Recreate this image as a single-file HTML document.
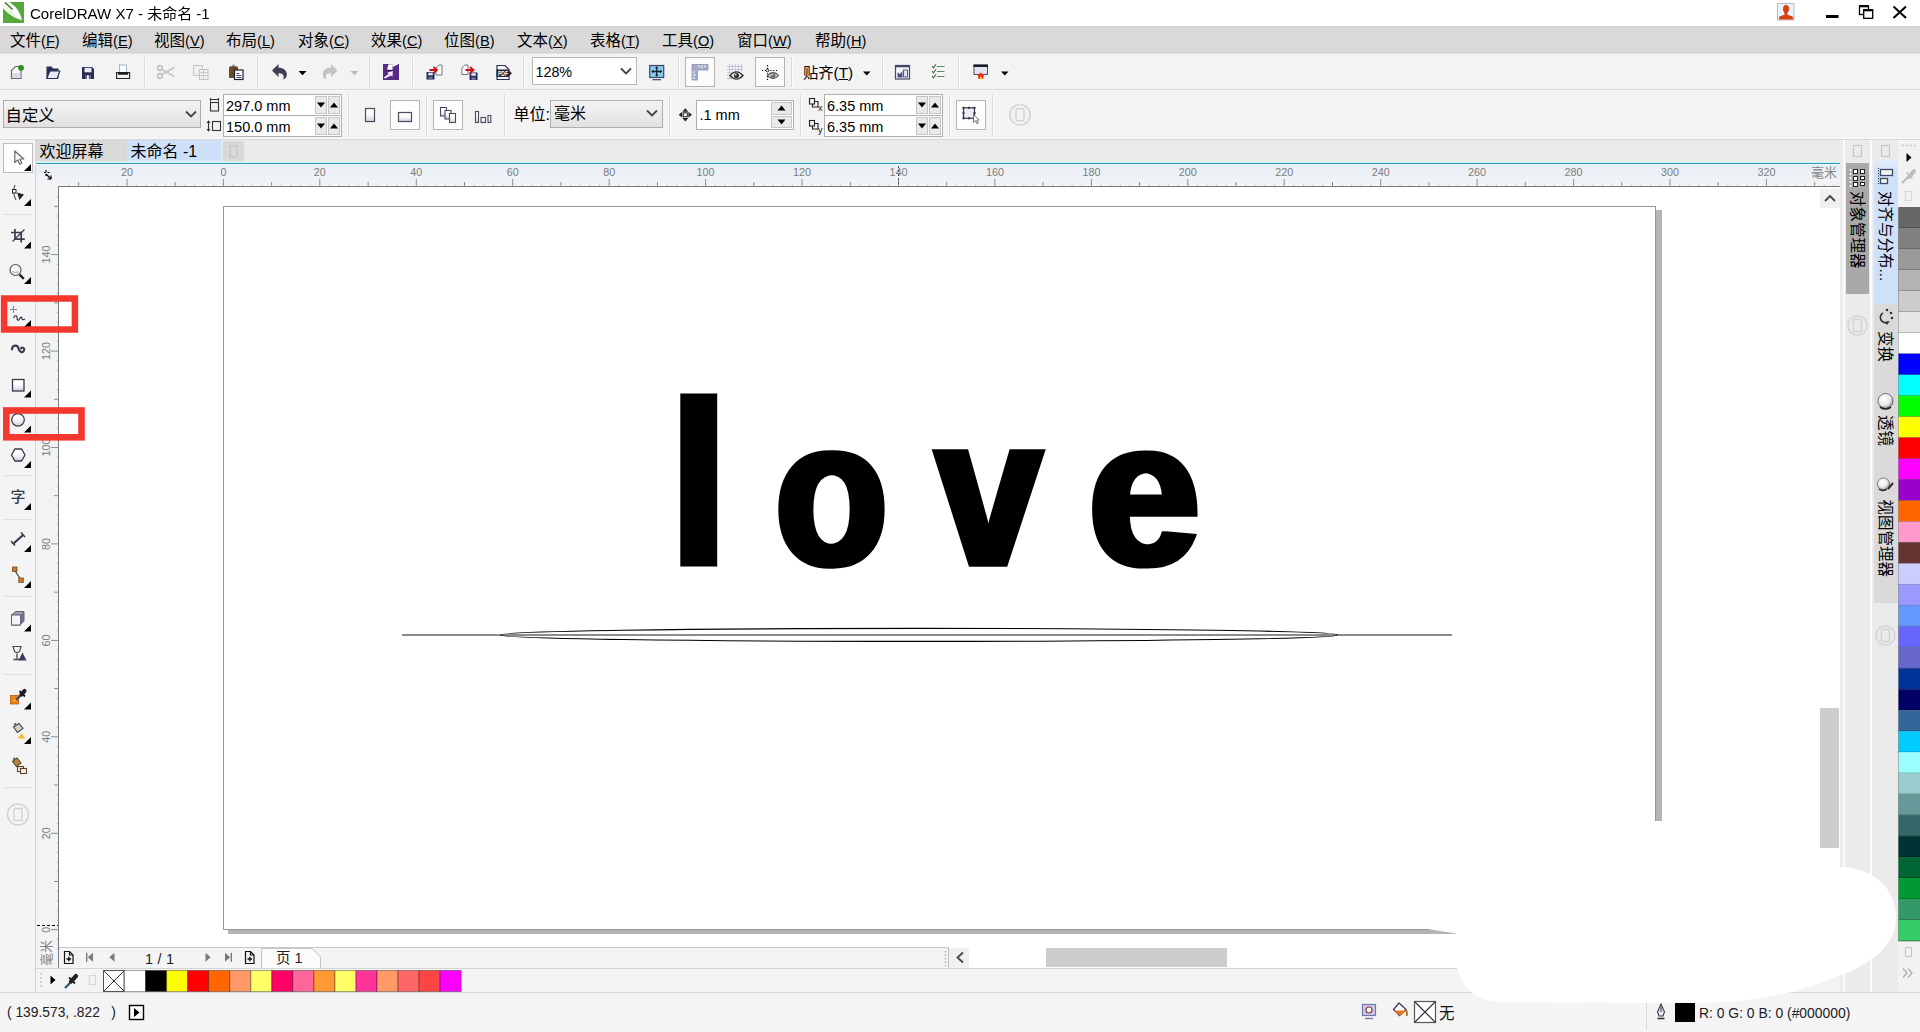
<!DOCTYPE html><html><head><meta charset="utf-8"><title>CorelDRAW X7</title><style>
*{box-sizing:border-box;margin:0;padding:0}
html,body{width:1920px;height:1032px;overflow:hidden;background:#f4f4f4;}
body{position:relative;font-family:"Liberation Sans","Noto Sans CJK SC",sans-serif;color:#000;font-size:15px;}
.a{position:absolute}
.t{position:absolute;white-space:nowrap;line-height:1}
svg{position:absolute;left:0;top:0;overflow:visible}
svg text{font-family:"Liberation Sans","Noto Sans CJK SC",sans-serif}
</style></head><body>
<div class="a" style="left:0px;top:0px;width:1920px;height:26px;background:#ffffff;"></div>
<div class="t" style="left:30px;top:5.9px;font-size:15.3px;color:#000;transform:scaleX(0.982);transform-origin:0 0">CorelDRAW X7 - 未命名 -1</div>
<div class="a" style="left:0px;top:26px;width:1920px;height:28px;background:#d9d9d9;"></div>
<div class="a" style="left:0px;top:26px;width:1920px;height:1px;background:#d3d3d3;"></div>
<div class="a" style="left:0px;top:49px;width:1920px;height:1px;background:#d5d5d5;"></div>
<div class="a" style="left:0px;top:52px;width:1920px;height:1px;background:#d3d3d3;"></div>
<div class="a" style="left:0px;top:53px;width:1920px;height:1px;background:#e2e2e2;"></div>
<div class="t" style="left:10px;top:32.7px;font-size:15.5px;color:#000;">文件<span style="font-size:14.6px">(<u>F</u>)</span></div>
<div class="t" style="left:82px;top:32.7px;font-size:15.5px;color:#000;">编辑<span style="font-size:14.6px">(<u>E</u>)</span></div>
<div class="t" style="left:154px;top:32.7px;font-size:15.5px;color:#000;">视图<span style="font-size:14.6px">(<u>V</u>)</span></div>
<div class="t" style="left:226px;top:32.7px;font-size:15.5px;color:#000;">布局<span style="font-size:14.6px">(<u>L</u>)</span></div>
<div class="t" style="left:298px;top:32.7px;font-size:15.5px;color:#000;">对象<span style="font-size:14.6px">(<u>C</u>)</span></div>
<div class="t" style="left:371px;top:32.7px;font-size:15.5px;color:#000;">效果<span style="font-size:14.6px">(<u>C</u>)</span></div>
<div class="t" style="left:444px;top:32.7px;font-size:15.5px;color:#000;">位图<span style="font-size:14.6px">(<u>B</u>)</span></div>
<div class="t" style="left:517px;top:32.7px;font-size:15.5px;color:#000;">文本<span style="font-size:14.6px">(<u>X</u>)</span></div>
<div class="t" style="left:590px;top:32.7px;font-size:15.5px;color:#000;">表格<span style="font-size:14.6px">(<u>T</u>)</span></div>
<div class="t" style="left:662px;top:32.7px;font-size:15.5px;color:#000;">工具<span style="font-size:14.6px">(<u>O</u>)</span></div>
<div class="t" style="left:737px;top:32.7px;font-size:15.5px;color:#000;">窗口<span style="font-size:14.6px">(<u>W</u>)</span></div>
<div class="t" style="left:815px;top:32.7px;font-size:15.5px;color:#000;">帮助<span style="font-size:14.6px">(<u>H</u>)</span></div>
<div class="a" style="left:0px;top:54px;width:1920px;height:35px;background:#f3f3f3;"></div>
<div class="a" style="left:0px;top:89px;width:1920px;height:1px;background:#d9d9d9;"></div>
<div class="a" style="left:0px;top:90px;width:1920px;height:1px;background:#f8f8f8;"></div>
<div class="a" style="left:144px;top:57px;width:1px;height:30px;background:#dadada;"></div>
<div class="a" style="left:145px;top:57px;width:1px;height:30px;background:#fbfbfb;"></div>
<div class="a" style="left:257px;top:57px;width:1px;height:30px;background:#dadada;"></div>
<div class="a" style="left:258px;top:57px;width:1px;height:30px;background:#fbfbfb;"></div>
<div class="a" style="left:369px;top:57px;width:1px;height:30px;background:#dadada;"></div>
<div class="a" style="left:370px;top:57px;width:1px;height:30px;background:#fbfbfb;"></div>
<div class="a" style="left:412px;top:57px;width:1px;height:30px;background:#dadada;"></div>
<div class="a" style="left:413px;top:57px;width:1px;height:30px;background:#fbfbfb;"></div>
<div class="a" style="left:523px;top:57px;width:1px;height:30px;background:#dadada;"></div>
<div class="a" style="left:524px;top:57px;width:1px;height:30px;background:#fbfbfb;"></div>
<div class="a" style="left:678px;top:57px;width:1px;height:30px;background:#dadada;"></div>
<div class="a" style="left:679px;top:57px;width:1px;height:30px;background:#fbfbfb;"></div>
<div class="a" style="left:791px;top:57px;width:1px;height:30px;background:#dadada;"></div>
<div class="a" style="left:792px;top:57px;width:1px;height:30px;background:#fbfbfb;"></div>
<div class="a" style="left:882px;top:57px;width:1px;height:30px;background:#dadada;"></div>
<div class="a" style="left:883px;top:57px;width:1px;height:30px;background:#fbfbfb;"></div>
<div class="a" style="left:958px;top:57px;width:1px;height:30px;background:#dadada;"></div>
<div class="a" style="left:959px;top:57px;width:1px;height:30px;background:#fbfbfb;"></div>
<div class="a" style="left:532px;top:57px;width:105px;height:28px;background:#fff;border:1px solid #b8b8b8"></div>
<div class="t" style="left:535.5px;top:64.5px;font-size:14.3px;color:#000;">128%</div>
<div class="a" style="left:685px;top:57px;width:30px;height:30px;background:#fbfbfb;border:1px solid #b4b4b4"></div>
<div class="a" style="left:755px;top:57px;width:30px;height:30px;background:#fbfbfb;border:1px solid #b4b4b4"></div>
<div class="t" style="left:803px;top:65px;font-size:15.3px;color:#000;">贴齐(<u>T</u>)</div>
<div class="a" style="left:0px;top:91px;width:1920px;height:48px;background:#f3f3f3;"></div>
<div class="a" style="left:0px;top:139px;width:1920px;height:1px;background:#d6d6d6;"></div>
<div class="a" style="left:0px;top:138px;width:1920px;height:1px;background:#f9f9f9;"></div>
<div class="a" style="left:348px;top:94px;width:1px;height:43px;background:#dadada;"></div>
<div class="a" style="left:349px;top:94px;width:1px;height:43px;background:#fbfbfb;"></div>
<div class="a" style="left:426px;top:94px;width:1px;height:43px;background:#dadada;"></div>
<div class="a" style="left:427px;top:94px;width:1px;height:43px;background:#fbfbfb;"></div>
<div class="a" style="left:504px;top:94px;width:1px;height:43px;background:#dadada;"></div>
<div class="a" style="left:505px;top:94px;width:1px;height:43px;background:#fbfbfb;"></div>
<div class="a" style="left:669px;top:94px;width:1px;height:43px;background:#dadada;"></div>
<div class="a" style="left:670px;top:94px;width:1px;height:43px;background:#fbfbfb;"></div>
<div class="a" style="left:800px;top:94px;width:1px;height:43px;background:#dadada;"></div>
<div class="a" style="left:801px;top:94px;width:1px;height:43px;background:#fbfbfb;"></div>
<div class="a" style="left:949px;top:94px;width:1px;height:43px;background:#dadada;"></div>
<div class="a" style="left:950px;top:94px;width:1px;height:43px;background:#fbfbfb;"></div>
<div class="a" style="left:992px;top:94px;width:1px;height:43px;background:#dadada;"></div>
<div class="a" style="left:993px;top:94px;width:1px;height:43px;background:#fbfbfb;"></div>
<div class="a" style="left:3px;top:100px;width:198px;height:28px;background:linear-gradient(#f3f3f3,#e1e1e1);border:1px solid #adadad"></div>
<div class="t" style="left:5.5px;top:107.3px;font-size:16.4px;color:#000;">自定义</div>
<div class="a" style="left:223px;top:94px;width:119px;height:43px;background:#fff;border:1px solid #b0b0b0"></div>
<div class="a" style="left:223px;top:115px;width:119px;height:1px;background:#b0b0b0;"></div>
<div class="a" style="left:315px;top:96px;width:12px;height:18px;background:#e9e9e9;border:1px solid #c6c6c6"></div>
<div class="a" style="left:328px;top:96px;width:12px;height:18px;background:#e9e9e9;border:1px solid #c6c6c6"></div>
<div class="t" style="left:226px;top:98.5px;font-size:14.5px;color:#000;">297.0 mm</div>
<div class="a" style="left:315px;top:117px;width:12px;height:18px;background:#e9e9e9;border:1px solid #c6c6c6"></div>
<div class="a" style="left:328px;top:117px;width:12px;height:18px;background:#e9e9e9;border:1px solid #c6c6c6"></div>
<div class="t" style="left:226px;top:119.5px;font-size:14.5px;color:#000;">150.0 mm</div>
<div class="a" style="left:824px;top:94px;width:119px;height:43px;background:#fff;border:1px solid #b0b0b0"></div>
<div class="a" style="left:824px;top:115px;width:119px;height:1px;background:#b0b0b0;"></div>
<div class="a" style="left:916px;top:96px;width:12px;height:18px;background:#e9e9e9;border:1px solid #c6c6c6"></div>
<div class="a" style="left:929px;top:96px;width:12px;height:18px;background:#e9e9e9;border:1px solid #c6c6c6"></div>
<div class="t" style="left:827px;top:98.5px;font-size:14.5px;color:#000;">6.35 mm</div>
<div class="a" style="left:916px;top:117px;width:12px;height:18px;background:#e9e9e9;border:1px solid #c6c6c6"></div>
<div class="a" style="left:929px;top:117px;width:12px;height:18px;background:#e9e9e9;border:1px solid #c6c6c6"></div>
<div class="t" style="left:827px;top:119.5px;font-size:14.5px;color:#000;">6.35 mm</div>
<div class="a" style="left:390px;top:100px;width:30px;height:30px;background:#fdfdfd;border:1px solid #b4b4b4"></div>
<div class="a" style="left:433px;top:100px;width:30px;height:30px;background:#fdfdfd;border:1px solid #b4b4b4"></div>
<div class="a" style="left:956px;top:100px;width:30px;height:30px;background:#fdfdfd;border:1px solid #b4b4b4"></div>
<div class="t" style="left:513.5px;top:106.5px;font-size:16px;color:#000;">单位:</div>
<div class="a" style="left:550px;top:100px;width:113px;height:28px;background:linear-gradient(#f3f3f3,#e1e1e1);border:1px solid #adadad"></div>
<div class="t" style="left:554px;top:106px;font-size:16px;color:#000;">毫米</div>
<div class="a" style="left:696px;top:100px;width:98px;height:30px;background:#fff;border:1px solid #b0b0b0"></div>
<div class="t" style="left:699.5px;top:107.5px;font-size:14.5px;color:#000;">.1 mm</div>
<div class="a" style="left:771px;top:102px;width:21px;height:12.5px;background:#e9e9e9;border:1px solid #c6c6c6"></div>
<div class="a" style="left:771px;top:115.5px;width:21px;height:12.5px;background:#e9e9e9;border:1px solid #c6c6c6"></div>
<div class="a" style="left:35px;top:140px;width:1885px;height:23px;background:#eaeaea;"></div>
<div class="a" style="left:35px;top:140px;width:92px;height:23px;background:#d9d9d9;"></div>
<div class="a" style="left:127px;top:140px;width:94px;height:23px;background:#cde0f7;"></div>
<div class="a" style="left:223px;top:141px;width:21px;height:22px;background:#d9d9d9;"></div>
<div class="t" style="left:39.5px;top:143.5px;font-size:16px;color:#000;">欢迎屏幕</div>
<div class="t" style="left:130.5px;top:143.5px;font-size:16px;color:#000;">未命名 -1</div>
<div class="a" style="left:36px;top:161px;width:1804px;height:1px;background:#f0f0f0;"></div>
<div class="a" style="left:36px;top:162px;width:1804px;height:1px;background:#bff2fa;"></div>
<div class="a" style="left:36px;top:163px;width:1804px;height:1px;background:#3e9cb8;"></div>
<div class="a" style="left:36px;top:164px;width:1804px;height:1px;background:#e6f5fa;"></div>
<div class="a" style="left:0px;top:140px;width:35px;height:853px;background:#f4f4f4;"></div>
<div class="a" style="left:35px;top:165px;width:1px;height:828px;background:#d2d2d2;"></div>
<div class="a" style="left:36px;top:165px;width:1804px;height:22px;background:linear-gradient(#e9eff7,#f4f4f5);"></div>
<div class="a" style="left:36px;top:187px;width:23px;height:781px;background:#f2f3f5;"></div>
<div class="a" style="left:59px;top:187px;width:1761px;height:761px;background:#ffffff;"></div>
<div class="a" style="left:1820px;top:187px;width:20px;height:761px;background:#ffffff;"></div>
<div class="a" style="left:1820px;top:189px;width:20px;height:19px;background:#f0f0f0;"></div>
<div class="a" style="left:1820px;top:708px;width:19px;height:139.5px;background:#cdcdcd;"></div>
<div class="a" style="left:59px;top:186px;width:1781px;height:1px;background:#7c7c7c;"></div>
<div class="a" style="left:58px;top:186px;width:1px;height:782px;background:#7c7c7c;"></div>
<div class="a" style="left:228px;top:930px;width:1431px;height:4px;background:#b4b4b4;"></div>
<div class="a" style="left:1656px;top:210px;width:6px;height:611px;background:#b4b4b4;"></div>
<div class="a" style="left:223px;top:206px;width:1433px;height:724px;background:#fff;border:1px solid #969696"></div>
<div class="a" style="left:3px;top:214px;width:29px;height:1px;background:#e2e2e2;"></div>
<div class="a" style="left:3px;top:475px;width:29px;height:1px;background:#e2e2e2;"></div>
<div class="a" style="left:3px;top:519px;width:29px;height:1px;background:#e2e2e2;"></div>
<div class="a" style="left:3px;top:596px;width:29px;height:1px;background:#e2e2e2;"></div>
<div class="a" style="left:3px;top:674px;width:29px;height:1px;background:#e2e2e2;"></div>
<div class="a" style="left:3px;top:787px;width:29px;height:1px;background:#e2e2e2;"></div>
<div class="a" style="left:1840px;top:140px;width:6px;height:853px;background:#ebebeb;"></div>
<div class="a" style="left:1843px;top:140px;width:2px;height:853px;background:#fbfbfb;"></div>
<div class="a" style="left:1846px;top:140px;width:23px;height:853px;background:#ebebeb;"></div>
<div class="a" style="left:1846px;top:163px;width:23px;height:131px;background:#a9a9a9;"></div>
<div class="a" style="left:1869px;top:140px;width:5px;height:853px;background:#ebebeb;"></div>
<div class="a" style="left:1870px;top:140px;width:2px;height:853px;background:#fbfbfb;"></div>
<div class="a" style="left:1874px;top:140px;width:24px;height:853px;background:#ebebeb;"></div>
<div class="a" style="left:1874px;top:160px;width:24px;height:144px;background:linear-gradient(#e4ecf8 0px,#cfe1fa 14px);"></div>
<div class="a" style="left:1874px;top:304px;width:24px;height:299px;background:#dadada;"></div>
<div class="a" style="left:1898px;top:140px;width:22px;height:853px;background:#f2f2f2;"></div>
<div class="a" style="left:59px;top:947px;width:890px;height:1px;background:#c8c8c8;"></div>
<div class="a" style="left:59px;top:948px;width:890px;height:21px;background:#f4f4f4;"></div>
<div class="a" style="left:949px;top:948px;width:20px;height:19px;background:#f0f0f0;"></div>
<div class="a" style="left:969px;top:947px;width:851px;height:21px;background:#ffffff;"></div>
<div class="a" style="left:1046px;top:948px;width:181px;height:19px;background:#cdcdcd;"></div>
<div class="a" style="left:36px;top:968px;width:1804px;height:1px;background:#d4d4d4;"></div>
<div class="a" style="left:948px;top:948px;width:1px;height:20px;background:#bdbdbd;"></div>
<div class="t" style="left:145px;top:952px;font-size:14.5px;color:#222;letter-spacing:0.2px">1 / 1</div>
<div class="a" style="left:36px;top:969px;width:1804px;height:23px;background:#f4f4f4;"></div>
<div class="a" style="left:0px;top:992px;width:1920px;height:1px;background:#d8d8d8;"></div>
<div class="a" style="left:0px;top:993px;width:1920px;height:39px;background:#f4f4f4;"></div>
<div class="t" style="left:7px;top:1006px;font-size:13.8px;color:#222;">( 139.573, .822&nbsp;&nbsp;&nbsp;)</div>
<div class="t" style="left:1439px;top:1005.5px;font-size:15.5px;color:#111;">无</div>
<div class="a" style="left:1646px;top:996px;width:1px;height:34px;background:#dadada;"></div>
<div class="t" style="left:1699px;top:1007px;font-size:13.9px;color:#222;">R: 0 G: 0 B: 0 (#000000)</div>
<svg width="1920" height="1032" viewBox="0 0 1920 1032"><path d="M317,102.5 h8 l-4,5z" fill="#000"/>
<path d="M330,107.5 h8 l-4,-5z" fill="#000"/>
<path d="M317,123.5 h8 l-4,5z" fill="#000"/>
<path d="M330,128.5 h8 l-4,-5z" fill="#000"/>
<path d="M918,102.5 h8 l-4,5z" fill="#000"/>
<path d="M931,107.5 h8 l-4,-5z" fill="#000"/>
<path d="M918,123.5 h8 l-4,5z" fill="#000"/>
<path d="M931,128.5 h8 l-4,-5z" fill="#000"/>
<path d="M777.5,110.5 h8 l-4,-5z" fill="#000"/><path d="M777.5,119.5 h8 l-4,5z" fill="#000"/>
<path d="M186,111.5 L191,116.5 L196,111.5" fill="none" stroke="#444" stroke-width="1.8"/>
<path d="M647,110.5 L652,115.5 L657,110.5" fill="none" stroke="#444" stroke-width="1.8"/>
<path d="M621,68.5 L626,73.5 L631,68.5" fill="none" stroke="#444" stroke-width="1.8"/>
<rect x="230" y="146" width="7" height="11" fill="none" stroke="#c4c4c4" stroke-width="1.2"/>
<path d="M1825,201 L1830,196 L1835,201" fill="none" stroke="#444" stroke-width="1.8"/>
<path d="M78.7,182V186M127.0,179V186M175.2,182V186M223.4,179V186M271.6,182V186M319.8,179V186M368.1,182V186M416.3,179V186M464.5,182V186M512.7,179V186M560.9,182V186M609.2,179V186M657.4,182V186M705.6,179V186M753.8,182V186M802.0,179V186M850.3,182V186M898.5,179V186M946.7,182V186M994.9,179V186M1043.1,182V186M1091.4,179V186M1139.6,182V186M1187.8,179V186M1236.0,182V186M1284.2,179V186M1332.5,182V186M1380.7,179V186M1428.9,182V186M1477.1,179V186M1525.3,182V186M1573.6,179V186M1621.8,182V186M1670.0,179V186M1718.2,182V186M1766.4,179V186M1814.7,182V186" stroke="#8e8e8e" stroke-width="1" fill="none"/>
<path d="M69.1,184.8V186M88.4,184.8V186M98.0,184.8V186M107.7,184.8V186M117.3,184.8V186M136.6,184.8V186M146.2,184.8V186M155.9,184.8V186M165.5,184.8V186M184.8,184.8V186M194.5,184.8V186M204.1,184.8V186M213.8,184.8V186M233.0,184.8V186M242.7,184.8V186M252.3,184.8V186M262.0,184.8V186M281.3,184.8V186M290.9,184.8V186M300.6,184.8V186M310.2,184.8V186M329.5,184.8V186M339.1,184.8V186M348.8,184.8V186M358.4,184.8V186M377.7,184.8V186M387.3,184.8V186M397.0,184.8V186M406.6,184.8V186M425.9,184.8V186M435.6,184.8V186M445.2,184.8V186M454.9,184.8V186M474.1,184.8V186M483.8,184.8V186M493.4,184.8V186M503.1,184.8V186M522.4,184.8V186M532.0,184.8V186M541.7,184.8V186M551.3,184.8V186M570.6,184.8V186M580.2,184.8V186M589.9,184.8V186M599.5,184.8V186M618.8,184.8V186M628.4,184.8V186M638.1,184.8V186M647.7,184.8V186M667.0,184.8V186M676.7,184.8V186M686.3,184.8V186M696.0,184.8V186M715.2,184.8V186M724.9,184.8V186M734.5,184.8V186M744.2,184.8V186M763.5,184.8V186M773.1,184.8V186M782.8,184.8V186M792.4,184.8V186M811.7,184.8V186M821.3,184.8V186M831.0,184.8V186M840.6,184.8V186M859.9,184.8V186M869.5,184.8V186M879.2,184.8V186M888.8,184.8V186M908.1,184.8V186M917.8,184.8V186M927.4,184.8V186M937.1,184.8V186M956.3,184.8V186M966.0,184.8V186M975.6,184.8V186M985.3,184.8V186M1004.6,184.8V186M1014.2,184.8V186M1023.9,184.8V186M1033.5,184.8V186M1052.8,184.8V186M1062.4,184.8V186M1072.1,184.8V186M1081.7,184.8V186M1101.0,184.8V186M1110.6,184.8V186M1120.3,184.8V186M1129.9,184.8V186M1149.2,184.8V186M1158.9,184.8V186M1168.5,184.8V186M1178.2,184.8V186M1197.4,184.8V186M1207.1,184.8V186M1216.7,184.8V186M1226.4,184.8V186M1245.7,184.8V186M1255.3,184.8V186M1265.0,184.8V186M1274.6,184.8V186M1293.9,184.8V186M1303.5,184.8V186M1313.2,184.8V186M1322.8,184.8V186M1342.1,184.8V186M1351.7,184.8V186M1361.4,184.8V186M1371.0,184.8V186M1390.3,184.8V186M1400.0,184.8V186M1409.6,184.8V186M1419.3,184.8V186M1438.5,184.8V186M1448.2,184.8V186M1457.8,184.8V186M1467.5,184.8V186M1486.8,184.8V186M1496.4,184.8V186M1506.1,184.8V186M1515.7,184.8V186M1535.0,184.8V186M1544.6,184.8V186M1554.3,184.8V186M1563.9,184.8V186M1583.2,184.8V186M1592.8,184.8V186M1602.5,184.8V186M1612.1,184.8V186M1631.4,184.8V186M1641.1,184.8V186M1650.7,184.8V186M1660.4,184.8V186M1679.6,184.8V186M1689.3,184.8V186M1698.9,184.8V186M1708.6,184.8V186M1727.9,184.8V186M1737.5,184.8V186M1747.2,184.8V186M1756.8,184.8V186M1776.1,184.8V186M1785.7,184.8V186M1795.4,184.8V186M1805.0,184.8V186M1824.3,184.8V186M1833.9,184.8V186" stroke="#b4b4b4" stroke-width="1" fill="none"/>
<text x="127.0" y="176.3" font-size="10.8" fill="#7c7c7c" text-anchor="middle">20</text>
<text x="223.4" y="176.3" font-size="10.8" fill="#7c7c7c" text-anchor="middle">0</text>
<text x="319.8" y="176.3" font-size="10.8" fill="#7c7c7c" text-anchor="middle">20</text>
<text x="416.3" y="176.3" font-size="10.8" fill="#7c7c7c" text-anchor="middle">40</text>
<text x="512.7" y="176.3" font-size="10.8" fill="#7c7c7c" text-anchor="middle">60</text>
<text x="609.2" y="176.3" font-size="10.8" fill="#7c7c7c" text-anchor="middle">80</text>
<text x="705.6" y="176.3" font-size="10.8" fill="#7c7c7c" text-anchor="middle">100</text>
<text x="802.0" y="176.3" font-size="10.8" fill="#7c7c7c" text-anchor="middle">120</text>
<text x="898.5" y="176.3" font-size="10.8" fill="#7c7c7c" text-anchor="middle">140</text>
<text x="994.9" y="176.3" font-size="10.8" fill="#7c7c7c" text-anchor="middle">160</text>
<text x="1091.4" y="176.3" font-size="10.8" fill="#7c7c7c" text-anchor="middle">180</text>
<text x="1187.8" y="176.3" font-size="10.8" fill="#7c7c7c" text-anchor="middle">200</text>
<text x="1284.2" y="176.3" font-size="10.8" fill="#7c7c7c" text-anchor="middle">220</text>
<text x="1380.7" y="176.3" font-size="10.8" fill="#7c7c7c" text-anchor="middle">240</text>
<text x="1477.1" y="176.3" font-size="10.8" fill="#7c7c7c" text-anchor="middle">260</text>
<text x="1573.6" y="176.3" font-size="10.8" fill="#7c7c7c" text-anchor="middle">280</text>
<text x="1670.0" y="176.3" font-size="10.8" fill="#7c7c7c" text-anchor="middle">300</text>
<text x="1766.4" y="176.3" font-size="10.8" fill="#7c7c7c" text-anchor="middle">320</text>
<text x="1811" y="177" font-size="13" fill="#858585">毫米</text>
<path d="M51,929.7H58M54,881.5H58M51,833.3H58M54,785.0H58M51,736.8H58M54,688.6H58M51,640.4H58M54,592.2H58M51,543.9H58M54,495.7H58M51,447.5H58M54,399.3H58M51,351.1H58M54,302.8H58M51,254.6H58M54,206.4H58" stroke="#8e8e8e" stroke-width="1" fill="none"/>
<path d="M56.8,949.0H58M56.8,939.3H58M56.8,920.1H58M56.8,910.4H58M56.8,900.8H58M56.8,891.1H58M56.8,871.8H58M56.8,862.2H58M56.8,852.5H58M56.8,842.9H58M56.8,823.6H58M56.8,814.0H58M56.8,804.3H58M56.8,794.7H58M56.8,775.4H58M56.8,765.8H58M56.8,756.1H58M56.8,746.5H58M56.8,727.2H58M56.8,717.5H58M56.8,707.9H58M56.8,698.2H58M56.8,679.0H58M56.8,669.3H58M56.8,659.7H58M56.8,650.0H58M56.8,630.7H58M56.8,621.1H58M56.8,611.4H58M56.8,601.8H58M56.8,582.5H58M56.8,572.9H58M56.8,563.2H58M56.8,553.6H58M56.8,534.3H58M56.8,524.7H58M56.8,515.0H58M56.8,505.4H58M56.8,486.1H58M56.8,476.4H58M56.8,466.8H58M56.8,457.1H58M56.8,437.9H58M56.8,428.2H58M56.8,418.6H58M56.8,408.9H58M56.8,389.6H58M56.8,380.0H58M56.8,370.3H58M56.8,360.7H58M56.8,341.4H58M56.8,331.8H58M56.8,322.1H58M56.8,312.5H58M56.8,293.2H58M56.8,283.6H58M56.8,273.9H58M56.8,264.3H58M56.8,245.0H58M56.8,235.3H58M56.8,225.7H58M56.8,216.0H58M56.8,196.8H58" stroke="#b4b4b4" stroke-width="1" fill="none"/>
<text transform="translate(49.5,929.7) rotate(-90)" font-size="10.8" fill="#7c7c7c" text-anchor="middle">0</text>
<text transform="translate(49.5,833.3) rotate(-90)" font-size="10.8" fill="#7c7c7c" text-anchor="middle">20</text>
<text transform="translate(49.5,736.8) rotate(-90)" font-size="10.8" fill="#7c7c7c" text-anchor="middle">40</text>
<text transform="translate(49.5,640.4) rotate(-90)" font-size="10.8" fill="#7c7c7c" text-anchor="middle">60</text>
<text transform="translate(49.5,543.9) rotate(-90)" font-size="10.8" fill="#7c7c7c" text-anchor="middle">80</text>
<text transform="translate(49.5,447.5) rotate(-90)" font-size="10.8" fill="#7c7c7c" text-anchor="middle">100</text>
<text transform="translate(49.5,351.1) rotate(-90)" font-size="10.8" fill="#7c7c7c" text-anchor="middle">120</text>
<text transform="translate(49.5,254.6) rotate(-90)" font-size="10.8" fill="#7c7c7c" text-anchor="middle">140</text>
<text transform="translate(51,966) rotate(-90)" font-size="13" fill="#858585">毫米</text>
<path d="M37,925.5H58" stroke="#000" stroke-width="1" stroke-dasharray="3,2"/>
<path d="M898.5,166V185" stroke="#555" stroke-width="1" stroke-dasharray="2,2"/>
<g stroke="#000" stroke-width="1.2" fill="none"><path d="M44,172.5h2M47.5,172.5h2M46,170v2M46,174v2"/><path d="M46,174 L51,179"/><path d="M51,179 v-3.5 M51,179 h-3.5"/></g>
<text transform="matrix(1.0505 0 0 0.9315 661.52 566.40)" font-size="256.0" font-weight="bold" fill="#000" style="font-family:'Liberation Sans',sans-serif">l</text>
<filter id="dilo" filterUnits="userSpaceOnUse" x="758.2" y="430.0" width="146.5999999999999" height="158.39999999999998"><feMorphology operator="dilate" radius="2 0"/></filter>
<g filter="url(#dilo)"><text transform="matrix(0.7157 0 0 0.8086 775.54 563.88)" font-size="256.0" font-weight="bold" fill="#000" stroke="#000" stroke-width="5.0" stroke-linejoin="miter" stroke-miterlimit="10" vector-effect="non-scaling-stroke" style="font-family:'Liberation Sans',sans-serif">o</text></g>
<filter id="dilv" filterUnits="userSpaceOnUse" x="912.6" y="429.7" width="152.39999999999998" height="156.3"><feMorphology operator="dilate" radius="2 0"/></filter>
<g filter="url(#dilv)"><text transform="matrix(0.7373 0 0 0.8229 936.36 563.50)" font-size="256.0" font-weight="bold" fill="#000" stroke="#000" stroke-width="5.0" stroke-linejoin="miter" stroke-miterlimit="10" vector-effect="non-scaling-stroke" style="font-family:'Liberation Sans',sans-serif">v</text></g>
<filter id="dile" filterUnits="userSpaceOnUse" x="1072" y="430.2" width="145.5" height="158.00000000000006"><feMorphology operator="dilate" radius="2 0"/></filter>
<g filter="url(#dile)"><text transform="matrix(0.7806 0 0 0.8057 1088.69 563.69)" font-size="256.0" font-weight="bold" fill="#000" stroke="#000" stroke-width="5.0" stroke-linejoin="miter" stroke-miterlimit="10" vector-effect="non-scaling-stroke" style="font-family:'Liberation Sans',sans-serif">e</text></g>
<path d="M402,635H1452" stroke="#000" stroke-width="1" opacity="0.9"/>
<ellipse cx="918.9" cy="634.9" rx="418.6" ry="6.5" fill="none" stroke="#000" stroke-width="1.1"/>
<g><rect x="3" y="2" width="21" height="21" fill="#57a83a"/><path d="M3,2 L9,2 C16,6 20,12 22,20 C14,18 7,13 3,7 Z" fill="#fff"/><path d="M3,2 L3,8 C6,12 12,17 21,20 C13,12 8,8 3,2z" fill="#eaf6e4"/><path d="M5,2.500 L12.500,9.500" stroke="#3c7a2c" stroke-width="1.6"/></g>
<g><rect x="1777.5" y="3.500" width="16.500" height="16.500" fill="#eaf2fa" stroke="#b4bccc" stroke-width="1"/><path d="M1786,5 c-2.400,0 -3,2 -3,4 c0,2 0.800,3 1.500,3.800 v2 c-2,0.600 -4.500,1 -5.500,2.200 v2.500 h14 v-2.500 c-1,-1.200 -3.500,-1.600 -5.500,-2.200 v-2 c0.700,-0.800 1.500,-1.800 1.500,-3.800 c0,-2 -0.600,-4 -3,-4z" fill="#d8400e"/></g>
<rect x="1826" y="15" width="12.500" height="3" fill="#000"/>
<g fill="#fff" stroke="#000" stroke-width="1.3"><rect x="1859.500" y="6" width="9" height="8.500"/><path d="M1859,6.200h10" stroke-width="2.200"/><rect x="1863.700" y="10" width="9" height="8.300"/><path d="M1863.200,10.200h10" stroke-width="2.200"/></g>
<path d="M1893.500,6.500 l12.500,11.500 M1906,6.500 l-12.500,11.500" stroke="#000" stroke-width="2"/>
<g><path d="M11.500,78.500 v-8 l4,-4 h5.500 v12z" fill="#fafafa" stroke="#6a6a78" stroke-width="1.200"/><path d="M12,73h8.500v5h-8.500z" fill="#dcdce4"/><circle cx="21" cy="67.800" r="2.900" fill="#2a8a1a"/></g>
<g><path d="M46.500,78.500 v-12 h5 l1.500,2 h5.500 v10z" fill="#292c56"/><path d="M46.800,78.500 l3,-7.500 h10 l-2.500,7.500z" fill="#e4e8f0" stroke="#292c56" stroke-width="1.100"/></g>
<g><path d="M82,67 h10 l2,2 v10 h-12z" fill="#292c56"/><rect x="84.500" y="67.800" width="7" height="4.500" fill="#e8e8f4"/><rect x="85" y="75" width="6" height="4" fill="#5a5f90"/><rect x="87" y="75.500" width="1.800" height="3.500" fill="#fff"/></g>
<g><rect x="119.500" y="65" width="7" height="9" fill="#fdfdff" stroke="#9ab0c8" stroke-width="0.900"/><path d="M116.600,72.500 h13 v6 h-13z" fill="#f6f2ea" stroke="#222" stroke-width="1.100"/><path d="M118,73.800h10.200" stroke="#111" stroke-width="1.800"/></g>
<g fill="none" stroke="#c4c4c4" stroke-width="1.700"><circle cx="160" cy="68" r="2.300"/><circle cx="160" cy="76" r="2.300"/><path d="M162,69.500 L174.500,76.500 M162,74.500 L174.500,67.500"/></g>
<g fill="#f0f0f0" stroke="#c4c4c4" stroke-width="1"><rect x="193.500" y="65.500" width="9" height="10"/><rect x="199.500" y="69.500" width="8.500" height="10"/><path d="M200,72.500h8M200,75.500h8M203.500,70v9" stroke-width="0.800"/></g>
<g><rect x="229" y="66.500" width="9" height="11.500" rx="1" fill="#6b4a2a"/><path d="M231.500,66.500 q2,-3 4,0z" fill="#e8e8e8" stroke="#555" stroke-width="0.800"/><rect x="234.500" y="70" width="8.500" height="9.500" fill="#fff" stroke="#223" stroke-width="1.200"/><path d="M236.500,73.500h3M236.500,75.500h5M236.500,77.500h5" stroke="#2c3163" stroke-width="0.900"/></g>
<g transform="translate(272,64)"><path d="M0,6.500 L6.500,0 V3.800 C11.500,3.800 14.800,6.500 14.800,10.500 C14.800,13 13.500,15 11,15.500 C12,14 12,11.500 10.500,10.300 C9.500,9.500 8,9.300 6.500,9.300 V13z" fill="#3e3e50"/></g>
<g transform="translate(337.5,64) scale(-1,1)"><path d="M0,6.500 L6.500,0 V3.800 C11.500,3.800 14.800,6.500 14.800,10.500 C14.800,13 13.500,15 11,15.500 C12,14 12,11.500 10.500,10.300 C9.500,9.500 8,9.300 6.500,9.300 V13z" fill="#c2c2c2"/></g>
<path d="M298.500,71 h8 l-4,4.200z" fill="#000"/><path d="M350.500,71 h8 l-4,4.200z" fill="#b8b8b8"/>
<g><rect x="383" y="64" width="16" height="16" fill="#572a86"/><path d="M388.3,64.600 L392.600,64.600 L392.500,67.200 L398.600,64.100 L399.200,63.700 L399.200,63 L392.600,63.500 Z" fill="#f3f3f3"/><path d="M388.300,64.600 L392.500,64.600 L392.500,69.900 L387,69.900 Z" fill="#fff"/><path d="M386.800,70.300h5.800" stroke="#1a0a30" stroke-width="0.900"/><path d="M392.900,70.900 L392.500,76.700 L391,75.400 L385,78.600 L383.700,77.400 L388.600,74 L387.400,72.600 Z" fill="#f6e6ff"/></g>
<g><rect x="426.5" y="72" width="8" height="7.500" fill="#292c56"/><rect x="428.3" y="72.7" width="4.500" height="2.600" fill="#e4e4f4"/><rect x="428.5" y="76.8" width="4" height="2.700" fill="#6a6fa0"/></g>
<path d="M436,75 v-7 l3,-3 h3 v10z" fill="#fafafa" stroke="#778" stroke-width="1"/><path d="M429.500,70 h6.500 M433.500,67 l3.500,3 l-3.500,3" fill="none" stroke="#d01010" stroke-width="1.800"/>
<g><rect x="469.5" y="72.5" width="8" height="7.500" fill="#292c56"/><rect x="471.3" y="73.2" width="4.500" height="2.600" fill="#e4e4f4"/><rect x="471.5" y="77.3" width="4" height="2.700" fill="#6a6fa0"/></g>
<path d="M461.800,74.500 v-6.500 l3,-3 h3.200 v9.500z" fill="#fafafa" stroke="#778" stroke-width="1"/><path d="M465.500,70 h7 M470,67 l3.500,3 l-3.500,3" fill="none" stroke="#d01010" stroke-width="1.800"/>
<g><path d="M497,79.500 v-14 h8 l4,4 v10z" fill="#f4f4fa" stroke="#2a2f55" stroke-width="1.200"/><path d="M496.500,69.500 h11.500 l4,3.700 l-4,3.700 h-11.500z" fill="#222638"/><text x="498" y="76.300" font-size="6.500" font-weight="bold" fill="#fff" textLength="10" lengthAdjust="spacingAndGlyphs">PDF</text></g>
<g><rect x="649.700" y="65.500" width="14" height="12" fill="#8cc6e8" stroke="#3c4866" stroke-width="1.200"/><path d="M656.700,67v9M652,71.500h9.500" stroke="#123" stroke-width="1.300"/><path d="M656.700,66.300l-1.800,2h3.600zM656.700,76.700l-1.800,-2h3.600zM651.300,71.500l2,-1.800v3.600zM662.200,71.500l-2,-1.800v3.600z" fill="#123"/><path d="M652.500,79.700h8.500" stroke="#3c4866" stroke-width="1.200"/></g>
<g><path d="M692,64.500 h16 v5.500 h-10.500 v10 h-5.500z" fill="#a6acc8" stroke="#8a90b0" stroke-width="0.800"/><path d="M699,65v2.500M702,65v3.500M705,65v2.500M692.500,72h2.500M692.500,75h3.500M692.500,78h2.500" stroke="#f4f4ff" stroke-width="1"/></g>
<path d="M727,66.500h16M727,69.500h16M727,72.500h8M727,75.500h6M727,78.500h5M729.500,64v16M732.500,64v12M735.500,64v9M738.500,64v8M741.500,64v8" stroke="#bcbccc" stroke-width="0.800"/>
<g opacity="1"><path d="M730.0,75.5 Q736.5,68.3 743.0,75.5 Q736.5,82.7 730.0,75.5z" fill="#f4f4f4" stroke="#333" stroke-width="1.400"/><circle cx="736.5" cy="75.5" r="2.600" fill="#333"/><circle cx="735.7" cy="74.7" r="0.800" fill="#fff"/></g>
<path d="M762,70.500h15M767.500,65v15" stroke="#000" stroke-width="1.200" stroke-dasharray="1.200,1.600"/><circle cx="767.500" cy="70.500" r="1.400" fill="#fff" stroke="#000" stroke-width="0.800"/>
<g opacity="0.85"><path d="M767.5,75.5 Q773,69.5 778.5,75.5 Q773,81.5 767.5,75.5z" fill="#f4f4f4" stroke="#555" stroke-width="1.400"/><circle cx="773" cy="75.5" r="2.600" fill="#555"/><circle cx="772.2" cy="74.7" r="0.800" fill="#fff"/></g>
<path d="M863,71.500 h7.500 l-3.750,4z" fill="#000"/>
<g><rect x="895.500" y="65.500" width="14" height="13.500" fill="#f4f4fa" stroke="#44486a" stroke-width="1.200"/><path d="M895.500,66.300h14" stroke="#44486a" stroke-width="2"/><path d="M897.500,77.500 v-5 l2.500,1.500 l2.500,-3 v6.500z" fill="#4a4f88"/><rect x="903.500" y="70" width="4" height="7" fill="#e0e0f0" stroke="#4a4f88" stroke-width="0.900"/></g>
<g stroke="#5a8a5a" fill="none" stroke-width="1.200"><path d="M937,66.500h7.500M937,71.500h7.500M937,76.500h7.500"/><path d="M932,66l1.500,1.800l2.500,-3.500M932,71l1.500,1.800l2.500,-3.500M932,76l1.500,1.800l2.500,-3.500" stroke="#3a6a3a" stroke-width="1.100"/></g>
<g><rect x="974" y="65" width="13.500" height="9.500" fill="#dfe3ee" stroke="#555" stroke-width="1"/><path d="M973.500,65.800h14.500" stroke="#1a1a2a" stroke-width="2.400"/><path d="M977.500,75 l3.300,-2.500 l3.300,2.500 l-1.300,4.500 l-2,-1.800 l-2,1.800z" fill="#e83020"/><path d="M979.500,78l1.300,-2l1.300,2l-1.300,1.500z" fill="#ffc020"/></g>
<path d="M1001,71.500 h7.500 l-3.750,4z" fill="#000"/>
<g fill="none" stroke="#333" stroke-width="1.100"><rect x="210.500" y="102.500" width="8" height="8.500" fill="#f0f0f6"/><path d="M210.500,98v3.500M218.500,98v3.500M210.500,99.500h8"/></g>
<g fill="none" stroke="#333" stroke-width="1.100"><rect x="212.500" y="121.500" width="8" height="9" fill="#f0f0f6"/><path d="M208.500,121.500v9M207,123l1.500,-1.800l1.500,1.800M207,129l1.500,1.800l1.500,-1.800"/></g>
<defs><linearGradient id="pg" x1="0" y1="0" x2="0" y2="1"><stop offset="0.400" stop-color="#fff"/><stop offset="1" stop-color="#d0d0e0"/></linearGradient></defs>
<rect x="365.500" y="108.500" width="9" height="13" fill="url(#pg)" stroke="#4a4a5c" stroke-width="1.200"/>
<rect x="398.500" y="112.500" width="13" height="9" fill="url(#pg)" stroke="#4a4a5c" stroke-width="1.200"/>
<g fill="url(#pg)" stroke="#4a4a5c" stroke-width="1.100"><rect x="440.500" y="107.500" width="6" height="8.500"/><rect x="445" y="110.500" width="6" height="8.500"/><rect x="449.500" y="113.500" width="6" height="9"/></g>
<g fill="url(#pg)" stroke="#4a4a5c" stroke-width="1.100"><rect x="475.500" y="111.500" width="3" height="11"/><rect x="481" y="117.500" width="4.500" height="5"/><rect x="488" y="115.500" width="2.800" height="7"/></g>
<g fill="#222"><path d="M685.300,108.200l3,3.500h-6zM685.300,121.400l3,-3.500h-6zM678.700,114.800l3.500,-3v6zM691.900,114.800l-3.500,-3v6z"/><rect x="683.300" y="112.800" width="4" height="4" fill="#fff" stroke="#222" stroke-width="1"/></g>
<g fill="none" stroke="#222" stroke-width="1.100"><rect x="809.5" y="98.5" width="5" height="5.500"/><path d="M812.5,104.0v3h5.500v-5.500h-3.500"/></g><text x="818.0" y="111.0" font-size="9" fill="#111">x</text>
<g fill="none" stroke="#222" stroke-width="1.100"><rect x="809.5" y="120.5" width="5" height="5.500"/><path d="M812.5,126.0v3h5.500v-5.500h-3.500"/></g><text x="818.0" y="133.0" font-size="9" fill="#111">y</text>
<g><rect x="963.500" y="107.800" width="11" height="10.500" fill="#ececf6" stroke="#333348" stroke-width="1.200"/><g fill="#333348"><rect x="962.500" y="106.800" width="2" height="2"/><rect x="973.500" y="106.800" width="2" height="2"/><rect x="962.500" y="117.300" width="2" height="2"/><rect x="968" y="106.800" width="2" height="2"/><rect x="968" y="117.300" width="2" height="2"/><rect x="962.500" y="112" width="2" height="2"/><rect x="973.500" y="112" width="2" height="2"/></g><path d="M973.500,114.500 v8 l2,-1.800 l1.500,3 l1.300,-0.700 l-1.500,-3 h2.500z" fill="#fff" stroke="#667" stroke-width="0.900"/></g>
<circle cx="1020" cy="114.8" r="10.2" fill="none" stroke="#d2d2d2" stroke-width="1.4"/><rect x="1016" y="108.8" width="8" height="12" rx="1" fill="none" stroke="#d2d2d2" stroke-width="1.4"/>
<rect x="3.500" y="143.500" width="29" height="29" fill="#fff" stroke="#bcbcbc" stroke-width="1"/>
<path d="M14.800,151 v11.500 l3,-2.600 l2,4.300 l2,-1 l-2,-4.200 h4z" fill="#fff" stroke="#666678" stroke-width="1.200" stroke-linejoin="round"/>
<path d="M31,171 h-7 l7,-7z" fill="#000"/>
<g><path d="M15,185 q-3,8 1,15" fill="none" stroke="#555" stroke-width="1.100"/><rect x="12.500" y="189.500" width="3.500" height="3.500" fill="#fff" stroke="#222" stroke-width="1"/><path d="M17,192.500 l7,2 l-4.500,5.500z" fill="#222"/></g>
<path d="M31,206 h-7 l7,-7z" fill="#000"/>
<g stroke="#3a3a4e" stroke-width="1.700" fill="none"><path d="M15,229v10.200h9.800M11,232.500h10.200v10"/><path d="M12.500,241.500 L24.500,229.500" stroke-width="1.300"/></g>
<path d="M31,248.5 h-7 l7,-7z" fill="#000"/>
<g><circle cx="15.500" cy="270" r="5.500" fill="#f4f4f8" stroke="#555" stroke-width="1.200"/><path d="M12.500,271.500 q3,2 6,0" stroke="#aab" stroke-width="1.200" fill="none"/><path d="M19.500,274.500 l4.300,4.300" stroke="#222" stroke-width="2.400"/></g>
<path d="M31,284 h-7 l7,-7z" fill="#000"/>
<g fill="none" stroke="#3a3a4e" stroke-width="1.200"><path d="M13.500,306v7M10,309.500h7" stroke="#7a84a0" stroke-width="1"/><path d="M13.500,318 c1.500,-3.500 3.500,-2.500 3.500,-0.500 c0,3 1.500,3.500 2.500,1.500 c1,-2.500 2.500,-2 2.500,-0.500 c0,1.500 1.500,1.500 3,0.500" stroke-width="1.300"/></g>
<path d="M31,327 h-7 l7,-7z" fill="#000"/>
<path d="M12,349.500 c0,-5 6,-5 6.500,-1 c0.500,3.500 4,5 5.500,2 c1,-2.500 -2,-4 -3,-2" fill="none" stroke="#3a3a4e" stroke-width="2.100" stroke-linecap="round"/>
<rect x="12.500" y="379.500" width="11.500" height="11.500" fill="url(#pg)" stroke="#3a3a4e" stroke-width="1.300"/>
<path d="M31,397.5 h-7 l7,-7z" fill="#000"/>
<circle cx="18" cy="419.800" r="6.300" fill="url(#pg)" stroke="#3a3a4e" stroke-width="1.300"/>
<path d="M31,432.5 h-7 l7,-7z" fill="#000"/>
<path d="M11.500,455 l3.500,-6 h6.500 l3.500,6 l-3.500,6 h-6.500z" fill="url(#pg)" stroke="#3a3a4e" stroke-width="1.300"/>
<path d="M31,468 h-7 l7,-7z" fill="#000"/>
<text x="10.500" y="501.500" font-size="15" font-weight="500" fill="#3a3a4e">字</text>
<path d="M31,510 h-7 l7,-7z" fill="#000"/>
<g stroke="#3a3a4e" fill="none"><path d="M13,544 L23,535" stroke-width="2.200"/><path d="M11,541l4,4.500M21,532.500l4,4.500" stroke-width="1.500"/></g>
<path d="M31,552 h-7 l7,-7z" fill="#000"/>
<g><path d="M14.500,570 L21,580" stroke="#444" stroke-width="1.300"/><rect x="12.500" y="567" width="4.500" height="4.500" fill="#c87a32" stroke="#7a4a1a" stroke-width="0.800"/><rect x="18.800" y="578" width="4.500" height="4.500" fill="#c87a32" stroke="#7a4a1a" stroke-width="0.800"/></g>
<path d="M31,588 h-7 l7,-7z" fill="#000"/>
<g><path d="M11.500,615 l4,-3.500 h8.500 v9.500 l-4,4 h-8.500z" fill="#9aa0b4" stroke="#556" stroke-width="0.900"/><rect x="11.500" y="615" width="9" height="10" fill="#f4f4fa" stroke="#556" stroke-width="0.900"/><path d="M20.500,615 l3.500,-3.500 v9.500 l-3.500,4z" fill="#6a708a"/></g>
<path d="M31,631.5 h-7 l7,-7z" fill="#000"/>
<g><path d="M13,646.500 h8 l-1.500,5 q-2.500,2 -5,0z" fill="#f0f0f6" stroke="#444" stroke-width="1.100"/><path d="M17,653.500v5M13.500,659.500h7" stroke="#444" stroke-width="1.300"/><path d="M22.500,652.500 l4,8 h-8z" fill="#3a3a5e"/></g>
<g><rect x="10.500" y="695.500" width="8" height="8.500" fill="#f08018" stroke="#b85c08" stroke-width="0.800"/><path d="M13,701 l2,-2 l2,2z" fill="#ffd060"/><path d="M16,700 l6,-6" stroke="#3a4a6a" stroke-width="2.400"/><path d="M21.500,694.500 l3,-3.500" stroke="#1a1a2a" stroke-width="4.200" stroke-linecap="round"/><path d="M19.500,691 l5.500,5.500" stroke="#1a1a2a" stroke-width="1.800"/></g>
<path d="M31,709.5 h-7 l7,-7z" fill="#000"/>
<g><path d="M13.500,727 l5.500,-3.500 l4,5 l-5.500,4z" fill="#d8d0c0" stroke="#444" stroke-width="1.100"/><path d="M14,725l2,-1.800" stroke="#444" stroke-width="1.400"/><path d="M17.500,738.500 l4.500,-5.500 l3,5.500z" fill="#f0c030"/></g>
<path d="M31,744 h-7 l7,-7z" fill="#000"/>
<g><path d="M12.500,761.500 l4.500,-3.500 l4,5 l-4.500,3.500z" fill="#c08040" stroke="#553" stroke-width="1.100"/><path d="M13,759.500l2,-1.800" stroke="#553" stroke-width="1.400"/><rect x="17.500" y="766.500" width="6" height="5" fill="#f4efe8" stroke="#5a4632" stroke-width="1.100"/><rect x="20.500" y="768.500" width="6" height="5" fill="#f4efe8" stroke="#5a4632" stroke-width="1.100"/></g>
<circle cx="18" cy="814.5" r="10.5" fill="none" stroke="#d2d2d2" stroke-width="1.4"/><rect x="14" y="808.5" width="8" height="12" rx="1" fill="none" stroke="#d2d2d2" stroke-width="1.4"/>
<rect x="1853.5" y="145.5" width="8" height="11" fill="none" stroke="#c6c6c6" stroke-width="1.2"/>
<rect x="1881.5" y="145.5" width="8" height="11" fill="none" stroke="#c6c6c6" stroke-width="1.2"/>
<text transform="translate(1857.5,191) rotate(90)" font-size="15.5" fill="#000" dominant-baseline="central">对象管理器</text>
<text transform="translate(1885.5,191) rotate(90)" font-size="15.5" fill="#000" dominant-baseline="central">对齐与分布...</text>
<text transform="translate(1885.5,331) rotate(90)" font-size="15.5" fill="#000" dominant-baseline="central">变换</text>
<text transform="translate(1885.5,415) rotate(90)" font-size="15.5" fill="#000" dominant-baseline="central">透镜</text>
<text transform="translate(1885.5,499.5) rotate(90)" font-size="15.5" fill="#000" dominant-baseline="central">视图管理器</text>
<g fill="#fff" stroke="#222" stroke-width="1"><rect x="1860.5" y="169.5" width="4" height="4"/><rect x="1853.5" y="169.5" width="4" height="4"/><rect x="1853.5" y="176.5" width="4" height="4"/><rect x="1853.5" y="182.5" width="4" height="4"/><rect x="1860.5" y="176.5" width="4" height="3"/><rect x="1860.5" y="182.5" width="4" height="3"/></g><path d="M1850.5,169v18" stroke="#fff" stroke-width="1.5" stroke-dasharray="2,2"/>
<path d="M1878.5,168v17" stroke="#223" stroke-width="1" stroke-dasharray="1,1.5"/><rect x="1880.5" y="169.5" width="12" height="6" fill="#f4f4f0" stroke="#3a4a6a" stroke-width="1.3"/><rect x="1880.5" y="178.5" width="7" height="5" fill="#f4f4f0" stroke="#3a4a6a" stroke-width="1.3"/>
<g fill="none" stroke="#333" stroke-width="1.6"><path d="M1883,313 a5,5 0 1 0 5,9"/></g><g fill="#333"><circle cx="1887" cy="310" r="1.3"/><circle cx="1891" cy="313" r="1.3"/><circle cx="1892" cy="318" r="1.3"/><path d="M1885,322l5,-1l-3,4z"/></g>
<defs><radialGradient id="sph" cx="0.4" cy="0.35" r="0.7"><stop offset="0" stop-color="#fff"/><stop offset="0.6" stop-color="#e8e8ee"/><stop offset="1" stop-color="#888"/></radialGradient></defs><circle cx="1885.5" cy="401" r="7.5" fill="url(#sph)" stroke="#555" stroke-width="0.8"/><path d="M1880,407 q5.5,4 11,0" fill="none" stroke="#222" stroke-width="1.6"/>
<circle cx="1883.5" cy="484" r="6" fill="url(#sph)" stroke="#666" stroke-width="0.8"/><path d="M1888,489 l5,-6" stroke="#333" stroke-width="2"/><path d="M1879,489 q4,3 8,0" fill="none" stroke="#223" stroke-width="1.5"/>
<circle cx="1857.5" cy="325.5" r="9.5" fill="none" stroke="#d2d2d2" stroke-width="1.4"/><rect x="1853.5" y="319.5" width="8" height="12" rx="1" fill="none" stroke="#d2d2d2" stroke-width="1.4"/>
<circle cx="1885.5" cy="635.5" r="9.5" fill="none" stroke="#d2d2d2" stroke-width="1.4"/><rect x="1881.5" y="629.5" width="8" height="12" rx="1" fill="none" stroke="#d2d2d2" stroke-width="1.4"/>
<path d="M1902,145.5h14" stroke="#b8b8b8" stroke-width="1.5" stroke-dasharray="1.5,2.5"/>
<path d="M1906.5,153 v9 l5,-4.5z" fill="#000"/>
<g stroke="#bdbdbd" fill="#bdbdbd"><path d="M1902,183 l8,-8" stroke-width="2.2"/><path d="M1909,177 l5,-6" stroke-width="4" stroke-linecap="round"/><path d="M1906.5,172.5 l6,6" stroke-width="1.6"/></g>
<rect x="1905.5" y="191.5" width="6" height="9" fill="none" stroke="#d8d8d8" stroke-width="1.2"/>
<rect x="1898.5" y="207.00" width="21.5" height="20.97" fill="#666666"/>
<path d="M1898.5,227.97H1920" stroke="#000" stroke-opacity="0.42" stroke-width="1"/>
<rect x="1898.5" y="227.97" width="21.5" height="20.97" fill="#808080"/>
<path d="M1898.5,248.94H1920" stroke="#000" stroke-opacity="0.42" stroke-width="1"/>
<rect x="1898.5" y="248.94" width="21.5" height="20.97" fill="#999999"/>
<path d="M1898.5,269.91H1920" stroke="#000" stroke-opacity="0.42" stroke-width="1"/>
<rect x="1898.5" y="269.91" width="21.5" height="20.97" fill="#b3b3b3"/>
<path d="M1898.5,290.88H1920" stroke="#000" stroke-opacity="0.42" stroke-width="1"/>
<rect x="1898.5" y="290.88" width="21.5" height="20.97" fill="#cccccc"/>
<path d="M1898.5,311.85H1920" stroke="#000" stroke-opacity="0.42" stroke-width="1"/>
<rect x="1898.5" y="311.85" width="21.5" height="20.97" fill="#e6e6e6"/>
<path d="M1898.5,332.82H1920" stroke="#000" stroke-opacity="0.42" stroke-width="1"/>
<rect x="1898.5" y="332.82" width="21.5" height="20.97" fill="#ffffff"/>
<path d="M1898.5,353.79H1920" stroke="#000" stroke-opacity="0.42" stroke-width="1"/>
<rect x="1898.5" y="353.79" width="21.5" height="20.97" fill="#0000ff"/>
<path d="M1898.5,374.76H1920" stroke="#000" stroke-opacity="0.42" stroke-width="1"/>
<rect x="1898.5" y="374.76" width="21.5" height="20.97" fill="#00ffff"/>
<path d="M1898.5,395.73H1920" stroke="#000" stroke-opacity="0.42" stroke-width="1"/>
<rect x="1898.5" y="395.73" width="21.5" height="20.97" fill="#00ff00"/>
<path d="M1898.5,416.70H1920" stroke="#000" stroke-opacity="0.42" stroke-width="1"/>
<rect x="1898.5" y="416.70" width="21.5" height="20.97" fill="#ffff00"/>
<path d="M1898.5,437.67H1920" stroke="#000" stroke-opacity="0.42" stroke-width="1"/>
<rect x="1898.5" y="437.67" width="21.5" height="20.97" fill="#ff0000"/>
<path d="M1898.5,458.64H1920" stroke="#000" stroke-opacity="0.42" stroke-width="1"/>
<rect x="1898.5" y="458.64" width="21.5" height="20.97" fill="#ff00ff"/>
<path d="M1898.5,479.61H1920" stroke="#000" stroke-opacity="0.42" stroke-width="1"/>
<rect x="1898.5" y="479.61" width="21.5" height="20.97" fill="#9900cc"/>
<path d="M1898.5,500.58H1920" stroke="#000" stroke-opacity="0.42" stroke-width="1"/>
<rect x="1898.5" y="500.58" width="21.5" height="20.97" fill="#ff6600"/>
<path d="M1898.5,521.55H1920" stroke="#000" stroke-opacity="0.42" stroke-width="1"/>
<rect x="1898.5" y="521.55" width="21.5" height="20.97" fill="#ff99cc"/>
<path d="M1898.5,542.52H1920" stroke="#000" stroke-opacity="0.42" stroke-width="1"/>
<rect x="1898.5" y="542.52" width="21.5" height="20.97" fill="#663333"/>
<path d="M1898.5,563.49H1920" stroke="#000" stroke-opacity="0.42" stroke-width="1"/>
<rect x="1898.5" y="563.49" width="21.5" height="20.97" fill="#ccccff"/>
<path d="M1898.5,584.46H1920" stroke="#000" stroke-opacity="0.42" stroke-width="1"/>
<rect x="1898.5" y="584.46" width="21.5" height="20.97" fill="#9999ff"/>
<path d="M1898.5,605.43H1920" stroke="#000" stroke-opacity="0.42" stroke-width="1"/>
<rect x="1898.5" y="605.43" width="21.5" height="20.97" fill="#6699ff"/>
<path d="M1898.5,626.40H1920" stroke="#000" stroke-opacity="0.42" stroke-width="1"/>
<rect x="1898.5" y="626.40" width="21.5" height="20.97" fill="#6666ff"/>
<path d="M1898.5,647.37H1920" stroke="#000" stroke-opacity="0.42" stroke-width="1"/>
<rect x="1898.5" y="647.37" width="21.5" height="20.97" fill="#6666cc"/>
<path d="M1898.5,668.34H1920" stroke="#000" stroke-opacity="0.42" stroke-width="1"/>
<rect x="1898.5" y="668.34" width="21.5" height="20.97" fill="#003399"/>
<path d="M1898.5,689.31H1920" stroke="#000" stroke-opacity="0.42" stroke-width="1"/>
<rect x="1898.5" y="689.31" width="21.5" height="20.97" fill="#000066"/>
<path d="M1898.5,710.28H1920" stroke="#000" stroke-opacity="0.42" stroke-width="1"/>
<rect x="1898.5" y="710.28" width="21.5" height="20.97" fill="#336699"/>
<path d="M1898.5,731.25H1920" stroke="#000" stroke-opacity="0.42" stroke-width="1"/>
<rect x="1898.5" y="731.25" width="21.5" height="20.97" fill="#00ccff"/>
<path d="M1898.5,752.22H1920" stroke="#000" stroke-opacity="0.42" stroke-width="1"/>
<rect x="1898.5" y="752.22" width="21.5" height="20.97" fill="#99ffff"/>
<path d="M1898.5,773.19H1920" stroke="#000" stroke-opacity="0.42" stroke-width="1"/>
<rect x="1898.5" y="773.19" width="21.5" height="20.97" fill="#99cccc"/>
<path d="M1898.5,794.16H1920" stroke="#000" stroke-opacity="0.42" stroke-width="1"/>
<rect x="1898.5" y="794.16" width="21.5" height="20.97" fill="#669999"/>
<path d="M1898.5,815.13H1920" stroke="#000" stroke-opacity="0.42" stroke-width="1"/>
<rect x="1898.5" y="815.13" width="21.5" height="20.97" fill="#336666"/>
<path d="M1898.5,836.10H1920" stroke="#000" stroke-opacity="0.42" stroke-width="1"/>
<rect x="1898.5" y="836.10" width="21.5" height="20.97" fill="#003333"/>
<path d="M1898.5,857.07H1920" stroke="#000" stroke-opacity="0.42" stroke-width="1"/>
<rect x="1898.5" y="857.07" width="21.5" height="20.97" fill="#006633"/>
<path d="M1898.5,878.04H1920" stroke="#000" stroke-opacity="0.42" stroke-width="1"/>
<rect x="1898.5" y="878.04" width="21.5" height="20.97" fill="#009933"/>
<path d="M1898.5,899.01H1920" stroke="#000" stroke-opacity="0.42" stroke-width="1"/>
<rect x="1898.5" y="899.01" width="21.5" height="20.97" fill="#339966"/>
<path d="M1898.5,919.98H1920" stroke="#000" stroke-opacity="0.42" stroke-width="1"/>
<rect x="1898.5" y="919.98" width="21.5" height="20.97" fill="#33cc66"/>
<path d="M1898.5,940.95H1920" stroke="#000" stroke-opacity="0.42" stroke-width="1"/>
<path d="M1898.5,207.5V941" stroke="#000" stroke-opacity="0.25" stroke-width="1"/>
<rect x="1905.5" y="947.5" width="6" height="9" fill="none" stroke="#c8c8c8" stroke-width="1.2"/>
<path d="M1903,968.5l4,4.5l-4,4.5M1908,968.5l4,4.5l-4,4.5" fill="none" stroke="#b0b0b0" stroke-width="1.4"/>
<path d="M963,952.5l-5.5,5l5.5,5" fill="none" stroke="#444" stroke-width="1.8"/>
<path d="M945.5,951v15" stroke="#aaa" stroke-width="1.5" stroke-dasharray="1.5,2"/>
<g fill="none" stroke="#111" stroke-width="1.2"><path d="M64.5,951.5 h5 l3.5,3.500 v8.500 h-8.500z"/><path d="M69.5,951.5 v3.500 h3.500"/><path d="M66.5,959.0h4.600M68.8,956.7v4.600" stroke-width="1.400"/></g>
<g fill="none" stroke="#111" stroke-width="1.2"><path d="M245.5,951.5 h5 l3.5,3.500 v8.500 h-8.500z"/><path d="M250.5,951.5 v3.500 h3.500"/><path d="M247.5,959.0h4.600M249.8,956.7v4.600" stroke-width="1.400"/></g>
<g fill="#7a7a7a"><path d="M93,952.800 v9 l-5.200,-4.500z"/><rect x="86" y="952.800" width="1.400" height="9"/>
<path d="M114.500,952.800 v9 l-5.200,-4.500z"/>
<path d="M205.500,952.800 v9 l5.200,-4.500z"/>
<path d="M225,952.800 v9 l5.200,-4.500z"/><rect x="230.600" y="952.800" width="1.400" height="9"/></g>
<path d="M261.5,968 V948.5 H312 L320.5,957 V968" fill="#fcfcfc" stroke="#c4c4c4" stroke-width="1"/>
<text x="276" y="963" font-size="14.5" fill="#222">页 1</text>
<path d="M41,973v16" stroke="#bbb" stroke-width="1.5" stroke-dasharray="1.5,2.5"/>
<path d="M50.5,975.5 v9 l5,-4.5z" fill="#000"/>
<g><path d="M65,988 l7,-7" stroke="#3a5a6a" stroke-width="2.4"/><path d="M71,981.5 l5,-5.5" stroke="#222" stroke-width="4.2" stroke-linecap="round"/><path d="M69,977.5 l6,6" stroke="#222" stroke-width="1.8"/></g>
<rect x="89.500" y="975.5" width="6" height="9" fill="none" stroke="#d6d6d6" stroke-width="1.2"/>
<rect x="103.50" y="970.5" width="20.5" height="21" fill="#fff" stroke="#555" stroke-width="1"/><path d="M104.00,971 l20,20 M124.00,971 l-20,20" stroke="#333" stroke-width="1"/>
<rect x="124.54" y="970.5" width="21.04" height="21" fill="#ffffff" stroke="#000" stroke-opacity="0.35" stroke-width="1"/>
<rect x="145.58" y="970.5" width="21.04" height="21" fill="#000000" stroke="#000" stroke-opacity="0.35" stroke-width="1"/>
<rect x="166.62" y="970.5" width="21.04" height="21" fill="#ffff00" stroke="#000" stroke-opacity="0.35" stroke-width="1"/>
<rect x="187.66" y="970.5" width="21.04" height="21" fill="#ff0000" stroke="#000" stroke-opacity="0.35" stroke-width="1"/>
<rect x="208.70" y="970.5" width="21.04" height="21" fill="#ff6600" stroke="#000" stroke-opacity="0.35" stroke-width="1"/>
<rect x="229.74" y="970.5" width="21.04" height="21" fill="#ff9966" stroke="#000" stroke-opacity="0.35" stroke-width="1"/>
<rect x="250.78" y="970.5" width="21.04" height="21" fill="#ffff66" stroke="#000" stroke-opacity="0.35" stroke-width="1"/>
<rect x="271.82" y="970.5" width="21.04" height="21" fill="#ff0066" stroke="#000" stroke-opacity="0.35" stroke-width="1"/>
<rect x="292.86" y="970.5" width="21.04" height="21" fill="#ff6699" stroke="#000" stroke-opacity="0.35" stroke-width="1"/>
<rect x="313.90" y="970.5" width="21.04" height="21" fill="#ff9933" stroke="#000" stroke-opacity="0.35" stroke-width="1"/>
<rect x="334.94" y="970.5" width="21.04" height="21" fill="#ffff66" stroke="#000" stroke-opacity="0.35" stroke-width="1"/>
<rect x="355.98" y="970.5" width="21.04" height="21" fill="#ff3399" stroke="#000" stroke-opacity="0.35" stroke-width="1"/>
<rect x="377.02" y="970.5" width="21.04" height="21" fill="#ff9966" stroke="#000" stroke-opacity="0.35" stroke-width="1"/>
<rect x="398.06" y="970.5" width="21.04" height="21" fill="#ff6666" stroke="#000" stroke-opacity="0.35" stroke-width="1"/>
<rect x="419.10" y="970.5" width="21.04" height="21" fill="#ff4444" stroke="#000" stroke-opacity="0.35" stroke-width="1"/>
<rect x="440.14" y="970.5" width="21.04" height="21" fill="#ff00ff" stroke="#000" stroke-opacity="0.35" stroke-width="1"/>
<rect x="129.5" y="1005.5" width="14" height="14" fill="#fff" stroke="#000" stroke-width="1.4"/><path d="M134,1008 v9 l5.5,-4.5z" fill="#000"/>
<g><rect x="1362.5" y="1004.5" width="13" height="11" fill="#c8cce8" stroke="#7078b0" stroke-width="1.2"/><circle cx="1369" cy="1010" r="3" fill="#fff" stroke="#a03030" stroke-width="1.2"/><path d="M1365,1018.5h8" stroke="#7078b0" stroke-width="1.4"/></g>
<g><path d="M1399,1003 l7,6.5 l-6.5,6 l-6,-6z" fill="#fff" stroke="#3a3a5a" stroke-width="1.3"/><path d="M1394,1010.5 l12,0 l-6,5.5z" fill="#e07820"/><path d="M1406,1010 q2,3 0.5,6" stroke="#c06010" stroke-width="1.6" fill="none"/></g>
<rect x="1414.5" y="1001.5" width="21" height="21" fill="#fff" stroke="#555" stroke-width="1.2"/><path d="M1415,1002 l20,20 M1435,1002 l-20,20" stroke="#333" stroke-width="1.2"/>
<g fill="none" stroke="#334" stroke-width="1.1"><path d="M1661,1004 l-3.5,8 l1.5,4 h4 l1.500,-4z" fill="#e8ecf4"/><path d="M1661,1007v5"/><path d="M1657.5,1018.500h7" stroke-width="1.6"/></g>
<rect x="1675" y="1002.500" width="20" height="19.500" fill="#000"/>
<rect x="4.100" y="298.500" width="70.800" height="31" fill="none" stroke="#f4382e" stroke-width="6.500"/>
<rect x="6.300" y="410.500" width="75.200" height="26.800" fill="none" stroke="#f4382e" stroke-width="6.600"/>
<path d="M1424,928.5 L1456,933.5 L1457,966 C1459,986 1476,1001 1502,1002.500 L1700,1003 C1760,1002 1800,992 1830,979 C1870,966 1896,946 1896,918 C1896,890 1876,868 1840,867 L1840,849 L1818,849 L1818,821 L1650,821 L1650,900 Z" fill="#fff"/></svg>
</body></html>
